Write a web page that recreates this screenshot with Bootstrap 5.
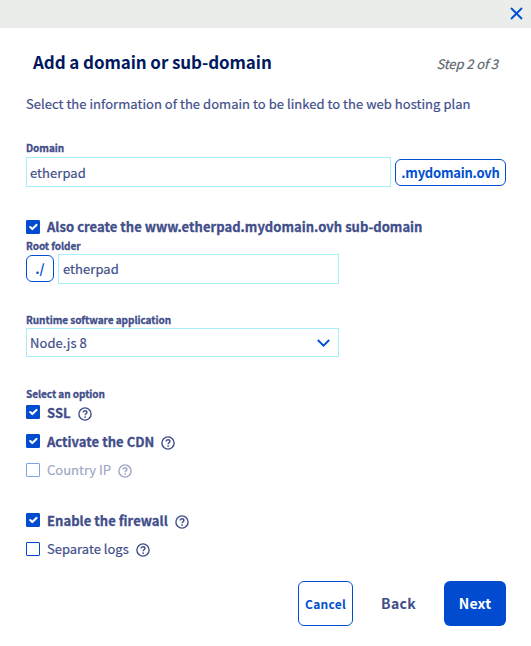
<!DOCTYPE html>
<html lang="en">
<head>
<meta charset="utf-8">
<meta name="viewport" content="width=device-width, initial-scale=1">
<title>Add a domain or sub-domain</title>
<link href="https://cdn.jsdelivr.net/npm/bootstrap@5.3.0/dist/css/bootstrap.min.css" rel="stylesheet">
<style>
body{font-family:"Noto Sans CJK SC","Noto Sans",sans-serif;font-size:13px;line-height:20px;color:#424e8a;background:#fff;height:646px;overflow:hidden;-webkit-text-stroke:.2px currentColor}
svg{-webkit-text-stroke:0}
.topbar{height:28px;background:#eaedea;padding:7px 8px 0 0}
.close-x{width:13px;height:13px;color:#004fd6;line-height:0}
.panel{padding:0 25px 0 26px}
.title-row{height:66px;padding:2px 8px 0 7px}
.dlg-title{font-size:17px;line-height:24px;font-weight:700;color:#00185e;letter-spacing:-.09px;-webkit-text-stroke:0}
.step{font-size:13px;font-style:italic;color:#5b676e;letter-spacing:-.1px;padding-top:4px}
.intro{height:47px;letter-spacing:.04px}
.lbl{font-size:10px;line-height:14px;font-weight:700;height:16px;-webkit-text-stroke:.3px currentColor;letter-spacing:-.04px}
.form-control.fld{height:30px;border:1px solid #a8effa;border-radius:0;padding:0 3px;font-size:13px;line-height:28px;color:#424e8a;box-shadow:none;letter-spacing:.06px}
.form-control.fld-root{padding:0 4px 2px;line-height:26px}
.tag{border:1px solid #004fd0;border-radius:6px;height:27px;line-height:26px;color:#004fd0;font-weight:700;text-align:center;flex:none;-webkit-text-stroke:0}
.tag-domain{width:111px;letter-spacing:-.2px}
.tag-root{width:28px;margin-bottom:2px}
.mid{width:313px}
.opt{height:20px;gap:7px}
.opt.fw-bold{letter-spacing:.04px;-webkit-text-stroke:.3px currentColor}
.form-check-input.cb{width:14px;height:14px;margin:0;border:1px solid #004bcf;border-radius:1px;box-shadow:none;flex:none}
.form-check-input.cb:checked{background-color:#004bcf;background-size:14px}
.form-check-input.up{margin-bottom:2px}
.off{opacity:.5}
.hlp{width:14px;height:14px;margin-top:2px}
.acts{margin-top:22px}
.act{height:45px;border-radius:6px;padding:0;font-weight:700;line-height:43px;-webkit-text-stroke:0}
.act-cancel{width:55px;font-size:12px;border:1px solid #004fd0;color:#004fd0;letter-spacing:.25px}
.act-back{width:91px;font-size:14px;color:#424e8a;border:0;letter-spacing:.3px}
.act-next{width:62px;font-size:14px;background:#004bcf;color:#fff;border:0;letter-spacing:.2px}
.gap-29{margin-top:29px}
.gap-30{margin-top:30px}
.gap-31{margin-top:31px}
.gap-9{margin-top:9px}
.gap-8{margin-top:8px}
</style>
</head>
<body>
<svg class="d-none">
<symbol id="q" viewBox="0 0 14 14"><circle cx="7" cy="7" r="6.1" fill="none" stroke="currentColor" stroke-width="1.4"/><path d="M5.1 5.5C5.1 4.3 6 3.8 7 3.8S8.9 4.4 8.9 5.4C8.9 6.7 7.1 6.7 7.1 8.2" fill="none" stroke="currentColor" stroke-width="1.4"/><circle cx="7.1" cy="10.1" r=".9" fill="currentColor"/></symbol>
</svg>
<div class="topbar d-flex justify-content-end">
<button type="button" class="close-x btn p-0 border-0" aria-label="Close"><svg width="13" height="13" viewBox="0 0 13 13"><path d="M1 1L12 12M12 1L1 12" stroke="currentColor" stroke-width="1.9" fill="none"/></svg></button>
</div>
<form class="panel">
<div class="title-row d-flex align-items-center justify-content-between"><h1 class="dlg-title m-0">Add a domain or sub-domain</h1><span class="step">Step 2 of 3</span></div>
<p class="intro m-0">Select the information of the domain to be linked to the web hosting plan</p>
<label class="lbl d-block" for="domain">Domain</label>
<div class="d-flex align-items-center gap-1">
<input id="domain" class="form-control fld flex-grow-1" value="etherpad">
<span class="tag tag-domain">.mydomain.ovh</span>
</div>
<div class="opt d-flex align-items-center fw-bold gap-30"><input class="form-check-input cb" type="checkbox" checked id="www"><label for="www">Also create the www.etherpad.mydomain.ovh sub-domain</label></div>
<label class="lbl d-block" for="root" style="margin-top:2px;height:15px">Root folder</label>
<div class="d-flex align-items-center gap-1 mid">
<span class="tag tag-root">./</span>
<input id="root" class="form-control fld fld-root" value="etherpad">
</div>
<div class="lbl gap-29" style="height:15px">Runtime software application</div>
<div class="form-control fld mid d-flex align-items-center justify-content-between pe-2" style="height:29px"><span>Node.js 8</span><svg width="13" height="8" viewBox="0 0 13 8"><path d="M.8 1L6.5 6.6L12.2 1" fill="none" stroke="#004fd6" stroke-width="1.9"/></svg></div>
<div class="lbl gap-30">Select an option</div>
<div class="opt d-flex align-items-center fw-bold"><input class="form-check-input cb up" type="checkbox" checked id="ssl"><label for="ssl">SSL</label><svg class="hlp"><use href="#q"/></svg></div>
<div class="opt d-flex align-items-center fw-bold gap-9"><input class="form-check-input cb up" type="checkbox" checked id="cdn"><label for="cdn">Activate the CDN</label><svg class="hlp"><use href="#q"/></svg></div>
<div class="opt off d-flex align-items-center gap-8"><input class="form-check-input cb" type="checkbox" id="ip"><label for="ip">Country IP</label><svg class="hlp"><use href="#q"/></svg></div>
<div class="opt d-flex align-items-center fw-bold gap-31"><input class="form-check-input cb up" type="checkbox" checked id="fw"><label for="fw">Enable the firewall</label><svg class="hlp"><use href="#q"/></svg></div>
<div class="opt d-flex align-items-center gap-8"><input class="form-check-input cb" type="checkbox" id="logs"><label for="logs">Separate logs</label><svg class="hlp"><use href="#q"/></svg></div>
<div class="acts d-flex justify-content-end"><button type="button" class="btn act act-cancel">Cancel</button><button type="button" class="btn act act-back">Back</button><button type="button" class="btn act act-next">Next</button></div>
</form>
<script src="https://cdn.jsdelivr.net/npm/bootstrap@5.3.0/dist/js/bootstrap.bundle.min.js"></script>
</body>
</html>
